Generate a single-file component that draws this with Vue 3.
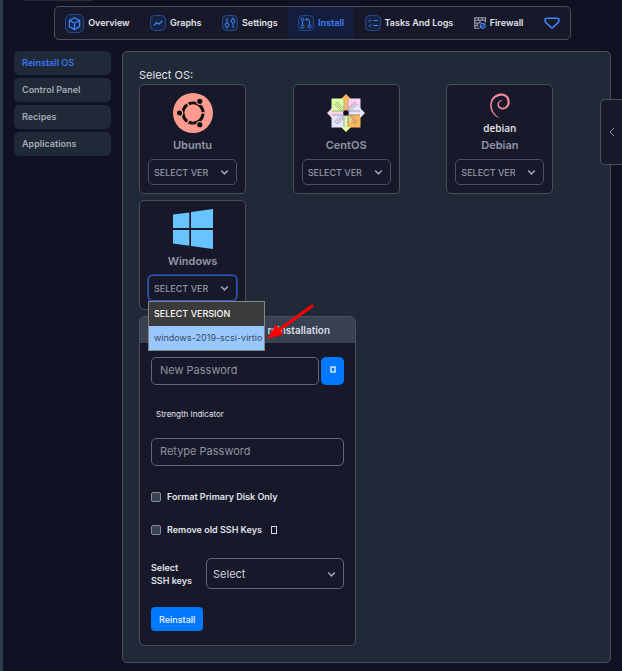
<script setup>
import { ref } from 'vue'

const tabs = [
  { name: 'Overview', icon: 'cube' },
  { name: 'Graphs', icon: 'graph' },
  { name: 'Settings', icon: 'sliders' },
  { name: 'Install', icon: 'install' },
  { name: 'Tasks And Logs', icon: 'tasks' },
  { name: 'Firewall', icon: 'firewall' },
]
const links = ['Reinstall OS', 'Control Panel', 'Recipes', 'Applications']
const systems = ['Ubuntu', 'CentOS', 'Debian', 'Windows']
const versions = ['SELECT VERSION', 'windows-2019-scsi-virtio']

const openSystem = ref('Windows')
const password = ref('')
const retype = ref('')
const formatDisk = ref(false)
const removeKeys = ref(false)
</script>

<template>
  <div class="page">
    <div class="stub"></div>
    <nav class="tabs">
      <a v-for="t in tabs" :key="t.name" href="#" class="tab" :class="[t.icon, { active: t.name === 'Install' }]">
        <svg v-if="t.icon === 'cube'" class="icon large" viewBox="0 0 19 19">
          <rect class="frame" x="0.5" y="0.5" width="18" height="18" rx="5" />
          <path stroke-width="1.3" d="M9.5 3.8 14.6 6.5v6L9.5 15.4 4.4 12.5v-6zM4.6 6.6 9.5 9.3l4.9-2.7M9.5 9.3v6" />
        </svg>
        <svg v-else-if="t.icon === 'graph'" class="icon" viewBox="0 0 16 16">
          <rect class="frame" x="0.5" y="0.5" width="15" height="15" rx="4" />
          <path stroke-width="1.3" d="M4 10.5 6.5 7.5 9 9.2 12.3 5.8" />
        </svg>
        <svg v-else-if="t.icon === 'sliders'" class="icon" viewBox="0 0 16 16">
          <rect class="frame" x="0.5" y="0.5" width="15" height="15" rx="4" />
          <path d="M5 3v5M5 12v2M11 2v2M11 8v5" />
          <circle cx="5" cy="10" r="1.9" />
          <circle cx="11" cy="6" r="1.9" />
        </svg>
        <svg v-else-if="t.icon === 'install'" class="icon" viewBox="0 0 16 16">
          <rect class="frame" x="0.5" y="0.5" width="15" height="15" rx="4" />
          <circle cx="4.5" cy="4.5" r="1.5" />
          <circle cx="4.5" cy="11.5" r="1.5" />
          <circle cx="11.5" cy="11.5" r="1.5" />
          <path d="M4.5 6v4M11.5 10V6.5q0-2-2-2H8M9.5 3 8 4.5 9.5 6" />
        </svg>
        <svg v-else-if="t.icon === 'tasks'" class="icon" viewBox="0 0 16 16">
          <rect class="frame" x="0.5" y="0.5" width="15" height="15" rx="4" />
          <path d="M3.5 5.5 4.5 6.5 6.3 4.5M3.5 10.5 4.5 11.5 6.3 9.5M8.3 5.5H13M8.3 10.5H13" />
        </svg>
        <svg v-else class="icon small" viewBox="0 0 11 11">
          <path class="wall" d="M10.5 5V.7H.7v9.600H5M.7 3H10.500M.7 5.500H6M.7 8H4M4 .7V3M7.500.7V3M5.500 3v2.500M3 5.500V8" />
          <circle cx="8" cy="8" r="2.300" />
          <path d="M6.500 9.500 9.500 6.500" />
        </svg>
        <span>{{ t.name }}</span>
      </a>
      <a href="#" class="tab heart" aria-label="More">
        <svg class="gem" viewBox="0 0 16 12">
          <path d="M3 1.200H13Q15.200 1.200 15 3.500 14.700 5 13.500 6.200L9.300 10.200Q8 11.400 6.700 10.200L2.500 6.200Q1.300 5 1 3.500 .8 1.200 3 1.200Z" />
        </svg>
      </a>
    </nav>

    <div class="layout">
      <aside class="side">
        <a v-for="(l, i) in links" :key="l" href="#" :class="{ current: i === 0 }">{{ l }}</a>
      </aside>

      <main class="panel">
        <h1>Select OS:</h1>
        <section class="systems">
          <article v-for="s in systems" :key="s" class="os">
            <svg v-if="s === 'Ubuntu'" class="logo" viewBox="0 0 40 40">
              <circle cx="20" cy="20" r="20" fill="#ff9c8f" />
              <circle cx="20" cy="20" r="10" fill="none" stroke="#111" stroke-width="3.2" />
              <g stroke="#ff9c8f" stroke-width="1.5">
                <path d="M20 20H34M20 20 13 7.900M20 20 13 32.100" />
              </g>
              <g fill="#111" stroke="#ff9c8f" stroke-width="1.2">
                <circle cx="6.5" cy="20" r="3.2" />
                <circle cx="26.8" cy="8.3" r="3.2" />
                <circle cx="26.8" cy="31.7" r="3.2" />
              </g>
              <circle cx="20" cy="20" r="8.4" fill="#ff9c8f" />
            </svg>
            <svg v-else-if="s === 'CentOS'" class="logo" viewBox="-20 -20 40 40">
              <path fill="#ddff9d" d="M-14.500-14.500H-1V-1H-14.500Z" />
              <path fill="#ffd3ed" d="M1-14.500H14.500V-1H1Z" />
              <path fill="#e7e6ff" d="M-14.500 1H-1V14.500H-14.500Z" />
              <path fill="#ffb85f" d="M1 1H14.500V14.500H1Z" />
              <path fill="#ddff9d" d="M-2-2-7-7-9-5-6-2ZM2 2 7 7 5 9 2 6Z" />
              <path fill="#e7e6ff" d="M2-2 9-9 14.500-4.500V-1H2Z" />
              <path fill="#ffd3ed" d="M-1 1.500H-14V5L-19 0-14-5V-1.500H-1Z" />
              <path fill="#e7e6ff" d="M1 1.500H14V5L19 0 14-5V-1.500H1Z" />
              <path fill="#ffb85f" d="M-1.500 0V-14H-5L0-19 5-14H1.500V0Z" />
              <path fill="#ddff9d" d="M-1.500 0V14H-5L0 19 5 14H1.500V0Z" />
              <g class="seams">
                <path d="M-2-2-9-9M2-2 9-9M-2 2-9 9M2 2 9 9" />
                <path d="M-2.500-5-8.500-11-11-8.500-5-2.500M2.500-5 8.500-11 11-8.500 5-2.500M-2.500 5-8.500 11-11 8.500-5 2.500M2.500 5 8.500 11 11 8.500 5 2.500" />
                <path d="M-2-14V-2H-14M2-14V-2H14M-2 14V2H-14M2 14V2H14" />
              </g>
              <circle r="2.8" fill="#101225" />
            </svg>
            <div v-else-if="s === 'Debian'" class="logo debian">
              <svg viewBox="0 0 22 26">
                <path fill="#f58a9b" d="M11.500 25.500C5 23.500 1 18 1.200 12 1.400 5 6 .8 12 .5 17.500.3 20.800 4 20.700 9 20.600 13.500 17.300 16.700 13.300 16.400 9.800 16.100 8 13.200 8.500 10.700 9 8 11.700 6.700 14 7.700 11.700 7.500 9.900 9 9.900 11.200 9.900 13.500 11.600 15 13.800 14.800 16.800 14.500 18.500 12 18.500 9 18.500 5 16 2.500 12.300 2.700 6.500 3 2.800 7 2.700 12.300 2.700 18 6.200 22.800 11.500 25.500Z" />
              </svg>
              <span>debian</span>
            </div>
            <svg v-else class="logo" viewBox="0 0 40 40">
              <path fill="#68c4ff" d="M0 5.600 16.300 3.400V19.100H0ZM18 3.100 40 0V19.100H18ZM0 20.900H16.300V36.700L0 34.400ZM18 20.900H40V40L18 37Z" />
            </svg>
            <label :for="'v-' + s">{{ s }}</label>
            <div class="pick" :class="{ open: openSystem === s }">
              <select :id="'v-' + s" @click="openSystem = s">
                <option>SELECT VERSION</option>
              </select>
              <svg class="chevron" viewBox="0 0 8 6"><path d="M1 1.200 4 4.200 7 1.200" /></svg>
              <ul v-if="openSystem === s" class="menu">
                <li v-for="(v, i) in versions" :key="v" :class="{ hover: i === 1 }">{{ v }}</li>
              </ul>
            </div>
          </article>
        </section>

        <form class="card" @submit.prevent>
          <h2>reinstallation</h2>
          <svg class="pointer" viewBox="0 0 50 38">
            <path stroke="#fe0000" stroke-width="3" stroke-linecap="round" d="M47 3 14 27" />
            <path fill="#fe0000" d="M2 36 11 21.500 18.500 31.500Z" />
          </svg>
          <div class="fields">
            <div class="row">
              <input v-model="password" class="text" type="password" placeholder="New Password" aria-label="New Password">
              <button type="button" class="gen" aria-label="Generate">
                <svg viewBox="0 0 6 7"><rect x="1" y="1" width="4" height="5" /></svg>
              </button>
            </div>
            <p class="strength">Strength Indicator</p>
            <input v-model="retype" class="text" type="password" placeholder="Retype Password" aria-label="Retype Password">
            <label class="check first"><input v-model="formatDisk" type="checkbox">Format Primary Disk Only</label>
            <label class="check">
              <input v-model="removeKeys" type="checkbox">Remove old SSH Keys
              <svg viewBox="0 0 6 8"><rect x="0.5" y="0.5" width="5" height="7" /></svg>
            </label>
            <div class="keys">
              <label for="keys">Select SSH keys</label>
              <div class="pick wide">
                <select id="keys"><option>Select</option></select>
                <svg class="chevron" viewBox="0 0 8 6"><path d="M1 1.200 4 4.200 7 1.200" /></svg>
              </div>
            </div>
            <button type="submit" class="submit">Reinstall</button>
          </div>
        </form>
      </main>
    </div>

    <button type="button" class="drawer" aria-label="Open panel">
      <svg viewBox="0 0 6 10"><path d="M5 1 1 5 5 9" /></svg>
    </button>
  </div>
</template>

<style>
body {
  margin: 0;
  background: #101122;
}
</style>

<style scoped>
* {
  box-sizing: border-box;
}
.page {
  position: relative;
  min-height: 100vh;
  padding: 6px 11px 8px;
  border-left: 3px solid #303b4d;
  background: #101122;
  color: #e2e4ea;
  font-family: Inter, sans-serif;
  font-size: 11px;
  line-height: 14px;
}
.stub {
  position: absolute;
  top: 0;
  left: 22px;
  width: 68px;
  height: 1px;
  background: #252b3b;
}
a {
  color: inherit;
  text-decoration: none;
}
h1, h2, p, ul {
  margin: 0;
  padding: 0;
  font-weight: 400;
}
svg {
  display: block;
  flex: none;
  fill: none;
}
button, input, select {
  margin: 0;
  font-family: inherit;
}
.tabs {
  display: flex;
  height: 34px;
  margin: 0 40px;
  border: 1px solid #4b4d59;
  border-radius: 5px;
  background: #17192b;
  overflow: hidden;
}
.tab {
  display: flex;
  flex: 1 1 auto;
  align-items: center;
  justify-content: center;
  gap: 4px;
  padding: 0 9px;
  font-size: 10px;
  font-size: 9px;
  font-weight: 600;
  white-space: nowrap;
}
.tab.active {
  color: #3b82f6;
  background: #131d3c;
}
.icon {
  width: 16px;
  height: 16px;
  stroke: #3f83f8;
}
.icon.large {
  width: 19px;
  height: 19px;
}
.icon.small {
  width: 12px;
  height: 12px;
}
.frame {
  fill: #162341;
  stroke: #26498b;
}
.wall {
  stroke: #a2a6b3;
}
.gem {
  width: 16px;
  height: 12px;
  stroke: #3f83f8;
  stroke-width: 1.6;
}
.layout {
  display: grid;
  grid-template-columns: 97px minmax(0, 1fr);
  gap: 11px;
  align-items: start;
  margin-top: 11px;
}
.side {
  display: grid;
  gap: 3px;
}
.side a {
  height: 24px;
  padding-left: 8px;
  border-radius: 5px;
  background: #1f2937;
  color: #a5a9b4;
  font-size: 9px;
  font-weight: 600;
  line-height: 23px;
}
.side .current {
  color: #3b74f0;
}
.panel {
  padding: 16px 10px 16px 16px;
  border: 1px solid #4b4e59;
  border-radius: 5px;
  background: #1f2937;
}
h1 {
  margin-bottom: 2px;
  font-size: 11px;
  line-height: 14px;
}
.systems {
  display: grid;
  grid-template-columns: repeat(3, minmax(0, 1fr));
  row-gap: 6px;
}
.os {
  display: flex;
  flex-direction: column;
  align-items: center;
  width: 107px;
  height: 110px;
  padding: 8px 8px 0;
  border: 1px solid #4b4d59;
  border-radius: 5px;
  background: #17192b;
}
.logo {
  width: 40px;
  height: 40px;
}
.seams {
  stroke: #77737c;
  stroke-width: 0.6;
}
.debian {
  display: flex;
  flex-direction: column;
  align-items: center;
}
.debian svg {
  width: 22px;
  height: 26px;
}
.debian span {
  color: #e6e6ec;
  font: 600 10px/18px "Open Sans", sans-serif;
}
.os label {
  margin-top: 4px;
  color: #9295a5;
  font-size: 11px;
  font-weight: 600;
  line-height: 16px;
}
.pick {
  position: relative;
  align-self: stretch;
  margin-top: 6px;
}
.pick select {
  display: block;
  width: 100%;
  height: 26px;
  padding: 0 28px 0 5px;
  border: 1px solid #4e505d;
  border-radius: 5px;
  outline: none;
  background: #17192b;
  color: #9295a5;
  font-size: 9px;
  font-weight: 500;
  appearance: none;
}
.pick.open select {
  border-color: #2a56b5;
  box-shadow: 0 0 0 1px #2a4384;
}
.chevron {
  position: absolute;
  top: 10px;
  right: 8px;
  width: 9px;
  height: 7px;
  stroke: #a0a3b1;
  stroke-width: 1.3;
  pointer-events: none;
}
.menu {
  position: absolute;
  top: 26px;
  left: 0;
  z-index: 2;
  width: max-content;
  border: 1px solid #858585;
  background: #3b3b3b;
  color: #fff;
  font-size: 9px;
  list-style: none;
}
.menu li {
  height: 24px;
  padding: 0 2px 0 5px;
  font-weight: 500;
  line-height: 24px;
}
.menu .hover {
  background: #99c8ff;
  color: #3b4a60;
  font-weight: 400;
}
.card {
  position: relative;
  width: 217px;
  margin-top: 6px;
  border: 1px solid #4b4e59;
  border-radius: 5px;
  background: #17192b;
}
h2 {
  padding-right: 25px;
  border-radius: 4px 4px 0 0;
  background: #374151;
  color: #d8dbe1;
  font-size: 10px;
  font-weight: 600;
  line-height: 26px;
  text-align: right;
}
.pointer {
  position: absolute;
  top: -14px;
  left: 125px;
  z-index: 3;
  width: 50px;
  height: 38px;
}
.fields {
  padding: 14px 11px;
}
.row {
  display: flex;
  gap: 2px;
}
.text {
  width: 100%;
  min-width: 0;
  height: 28px;
  padding: 0 8px 2px;
  border: 1px solid #626573;
  border-radius: 5px;
  background: #17192b;
  color: #e2e4ea;
  font-size: 11px;
}
.text::placeholder {
  color: #8f929e;
}
.gen {
  display: grid;
  flex: none;
  place-items: center;
  width: 23px;
  padding: 0 0 4px;
  border: 0;
  border-radius: 5px;
  background: #0078ff;
}
.gen svg {
  width: 6px;
  height: 7px;
  stroke: #cfe6ff;
  stroke-width: 1.5;
}
.strength {
  padding: 22px 5px 17px;
  font-size: 8px;
}
.check {
  display: flex;
  align-items: center;
  gap: 6px;
  height: 14px;
  margin-top: 19px;
  font-size: 9px;
  font-weight: 600;
}
.check.first {
  margin-top: 24px;
}
.check input {
  width: 10px;
  height: 10px;
  border: 1px solid #8a8a90;
  border-radius: 2px;
  background: #374151;
  appearance: none;
}
.check svg {
  width: 6px;
  height: 8px;
  margin-left: 3px;
  stroke: #d5d8e2;
}
.keys {
  display: flex;
  align-items: center;
  gap: 10px;
  margin-top: 21px;
  font-size: 9px;
  font-weight: 600;
  line-height: 13px;
}
.keys label {
  width: 45px;
}
.wide {
  flex: 1;
  margin-top: 0;
}
.wide select {
  height: 31px;
  padding-left: 6px;
  border-color: #626573;
  color: #d0d2dc;
  font-size: 11px;
  font-weight: 400;
}
.wide .chevron {
  top: 13px;
}
.submit {
  display: block;
  height: 24px;
  margin-top: 18px;
  padding: 0 8px;
  border: 0;
  border-radius: 4px;
  background: #0078ff;
  color: #f3f7ff;
  font-size: 9px;
  font-weight: 500;
}
.drawer {
  position: absolute;
  top: 99px;
  right: 0;
  display: grid;
  place-items: center;
  width: 22px;
  height: 66px;
  padding: 0;
  border: 1px solid #4b4d59;
  border-right: 0;
  border-radius: 5px 0 0 5px;
  background: #17192b;
}
.drawer svg {
  width: 6px;
  height: 10px;
  stroke: #8d909f;
}
</style>
